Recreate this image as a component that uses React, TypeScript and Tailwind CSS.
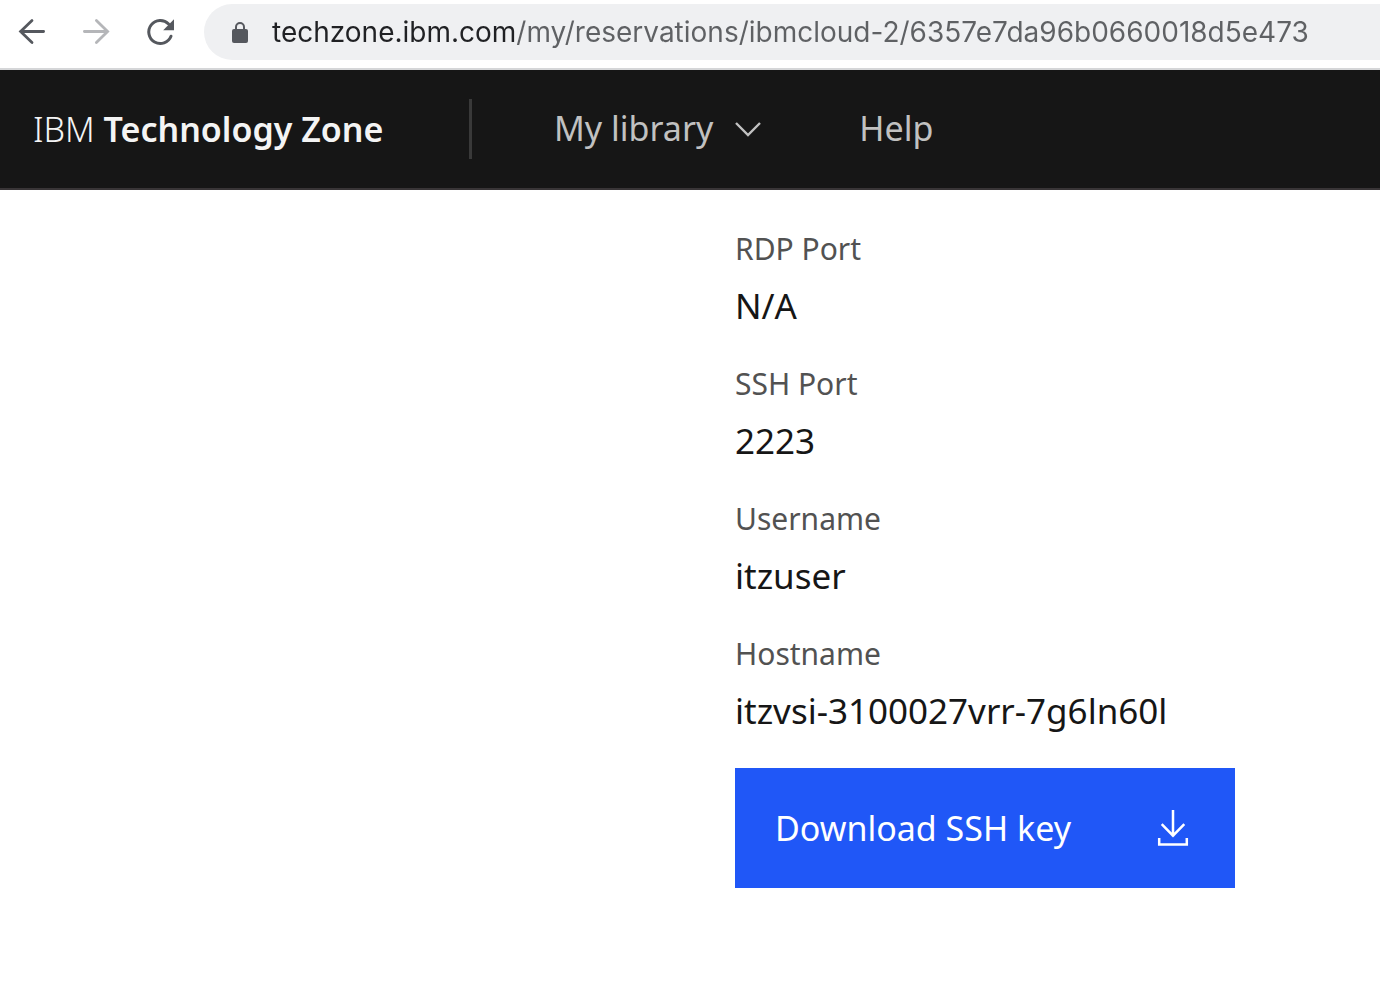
const details = [
  { label: 'RDP Port', value: 'N/A' },
  { label: 'SSH Port', value: '2223' },
  { label: 'Username', value: 'itzuser' },
  { label: 'Hostname', value: 'itzvsi-3100027vrr-7g6ln60l' },
];

function BackIcon() {
  return (
    <svg width="32" height="32" viewBox="0 0 32 32" fill="none" stroke="currentColor" strokeWidth="2.8" strokeLinecap="round" aria-hidden="true">
      <path d="M27.6 15.5H4.6M16 4.6L4.6 15.5L16 26.6" />
    </svg>
  );
}

function ForwardIcon() {
  return (
    <svg width="32" height="32" viewBox="0 0 32 32" fill="none" stroke="currentColor" strokeWidth="2.8" strokeLinecap="round" aria-hidden="true">
      <path d="M4.4 15.5H27.4M16.4 4.6L27.6 15.5L16.4 26.6" />
    </svg>
  );
}

function ReloadIcon() {
  return (
    <svg width="32" height="32" viewBox="0 0 32 32" fill="none" aria-hidden="true">
      <path d="M24.6 8A11.5 11.5 0 1 0 27 20.2" stroke="currentColor" strokeWidth="3" strokeLinecap="round" />
      <path d="M30 3.2V14.2H19.2Z" fill="currentColor" />
    </svg>
  );
}

function LockIcon() {
  return (
    <svg className="shrink-0" width="16" height="22" viewBox="0 0 16 22" fill="none" aria-hidden="true">
      <path d="M4 10V6A4 4 0 0 1 12 6V10" stroke="currentColor" strokeWidth="2" />
      <rect x="0" y="8" width="16" height="14" rx="2" fill="currentColor" />
    </svg>
  );
}

function BrowserBar() {
  return (
    <div className="flex h-[70px] items-start border-b-2 border-[#d5d6d8] bg-white pt-1 pl-4 text-[#55585e]">
      <div className="flex h-14 shrink-0 items-center gap-8">
        <button type="button" aria-label="Back"><BackIcon /></button>
        <button type="button" aria-label="Forward" className="text-[#b5b6b9]"><ForwardIcon /></button>
        <button type="button" aria-label="Reload"><ReloadIcon /></button>
      </div>
      <div className="ml-7 flex h-14 min-w-0 flex-1 items-center gap-6 rounded-l-full bg-[#eff0f2] pl-7">
        <LockIcon />
        <input
          type="text"
          aria-label="Address"
          defaultValue="techzone.ibm.com/my/reservations/ibmcloud-2/6357e7da96b0660018d5e473"
          className="h-10 min-w-0 flex-1 bg-[linear-gradient(to_right,#202124_244px,#5f6164_244px)] bg-clip-text font-['Inter',sans-serif] text-[28px] text-transparent caret-[#202124] outline-none"
        />
      </div>
    </div>
  );
}

function SiteHeader() {
  return (
    <header className="flex h-[120px] items-center border-b-2 border-[#393537] bg-[#161616] text-[34px] leading-[45px] text-[#c1c1c1]">
      <a href="#home" className="w-[469px] shrink-0 pl-[33px] whitespace-nowrap text-[#f4f4f4]">
        <span className="font-light">IBM</span> <span className="font-semibold">Technology Zone</span>
      </a>
      <div className="h-[60px] w-[3px] shrink-0 bg-[#393939]" />
      <nav className="ml-[82px] flex items-center gap-24 pb-0.5 whitespace-nowrap">
        <button type="button" className="flex items-center gap-5">
          My library
          <svg className="mt-0.5" width="30" height="20" viewBox="0 0 30 20" fill="none" stroke="currentColor" strokeWidth="2.4" aria-hidden="true">
            <path d="M3 4L15 16L27 4" />
          </svg>
        </button>
        <a href="#help">Help</a>
      </nav>
    </header>
  );
}

export default function App() {
  return (
    <div className="min-h-screen bg-white font-['Noto_Sans',sans-serif]">
      <BrowserBar />
      <SiteHeader />
      <main className="grid grid-cols-[735fr_645fr]">
        <div className="col-start-2 pt-[39px]">
          <dl className="flex flex-col gap-9">
            {details.map(({ label, value }) => (
              <div key={label} className="flex flex-col gap-[14px]">
                <dt className="text-[30px] leading-[40px] text-[#525252]">{label}</dt>
                <dd className="text-[35px] leading-[45px] text-[#161616]">{value}</dd>
              </div>
            ))}
          </dl>
          <button type="button" className="mt-[35px] flex h-[120px] w-[500px] max-w-full items-center justify-between bg-[#2057f7] pr-[42px] pl-10 text-[34px] leading-[45px] text-white">
            Download SSH key
            <svg width="40" height="40" viewBox="0 0 40 40" fill="none" stroke="currentColor" strokeWidth="2.5" aria-hidden="true">
              <path d="M20 2V28.5M8.7 16.2L20 27.6L31.3 16.2M6.2 30V36.6H33.8V30" />
            </svg>
          </button>
        </div>
      </main>
    </div>
  );
}
